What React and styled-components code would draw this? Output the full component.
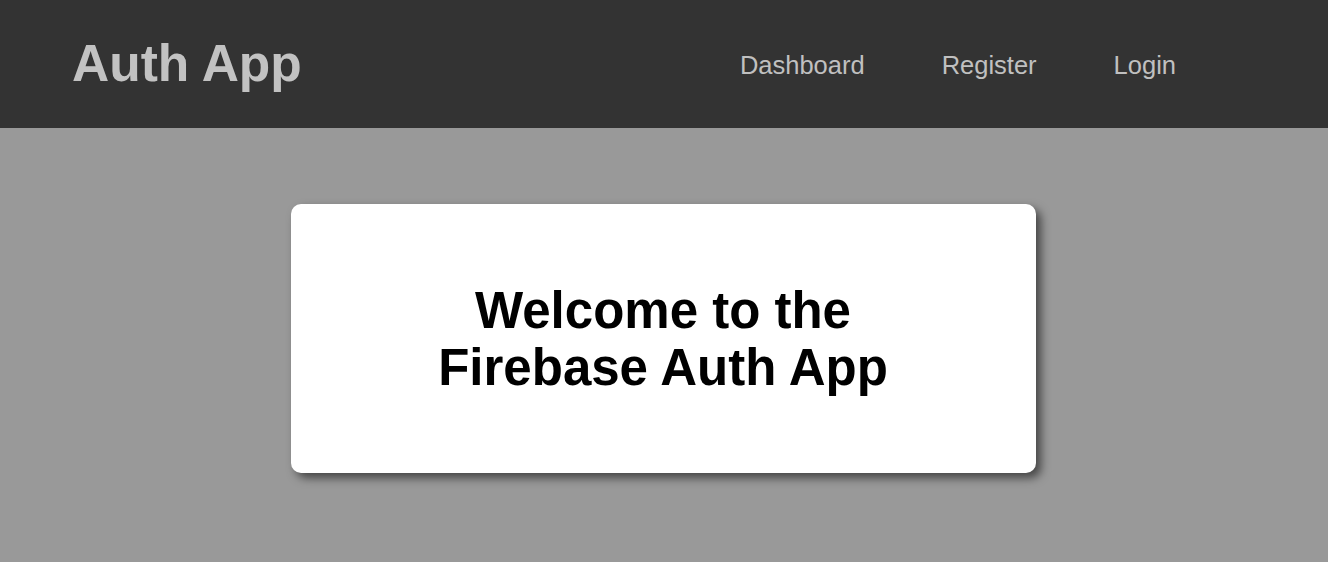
import React from 'react';
import styled, { createGlobalStyle } from 'styled-components';

const GlobalStyle = createGlobalStyle`
  html, body {
    margin: 0;
    padding: 0;
    height: 100%;
    background: #999999;
    font-family: 'Liberation Sans', Arial, sans-serif;
  }
  #root {
    min-height: 100%;
  }
`;

const Header = styled.header`
  background: #333333;
  height: 128px;
  display: flex;
  align-items: center;
  justify-content: space-between;
  padding: 0 152px 0 72px;
  box-sizing: border-box;
`;

const Brand = styled.h1`
  margin: 0;
  font-size: 51.5px;
  font-weight: 700;
  color: #c2c2c2;
  line-height: 1;
`;

const Nav = styled.nav`
  display: flex;
  align-items: center;
  gap: 77px;
  margin-top: 2px;
`;

const NavLink = styled.a`
  font-size: 25.5px;
  color: #c0c0c0;
  text-decoration: none;
  cursor: pointer;
`;

const Main = styled.main`
  display: flex;
  justify-content: center;
  padding-top: 76px;
`;

const Card = styled.div`
  width: 745px;
  height: 269px;
  margin-right: 2px;
  box-sizing: border-box;
  background: #ffffff;
  border-radius: 10px;
  box-shadow: 5px 5px 10px rgba(0, 0, 0, 0.55);
  display: flex;
  justify-content: center;
  padding-top: 78px;
`;

const Heading = styled.h2`
  margin: 0;
  max-width: 520px;
  text-align: center;
  font-size: 51px;
  font-weight: 700;
  line-height: 57px;
  color: #000000;
`;

const links = ['Dashboard', 'Register', 'Login'];

const App = () => {
  return (
    <>
      <GlobalStyle />
      <Header>
        <Brand>Auth App</Brand>
        <Nav>
          {links.map((label) => (
            <NavLink key={label}>{label}</NavLink>
          ))}
        </Nav>
      </Header>
      <Main>
        <Card>
          <Heading>Welcome to the Firebase Auth App</Heading>
        </Card>
      </Main>
    </>
  );
};

export default App;
